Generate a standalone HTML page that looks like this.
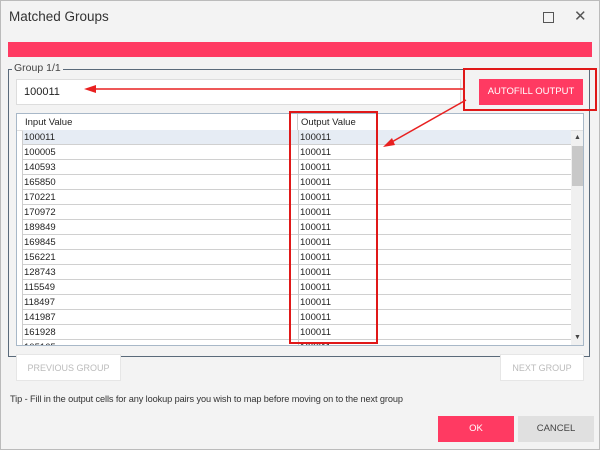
<!DOCTYPE html>
<html><head><style>
*{margin:0;padding:0;box-sizing:border-box}
body{width:600px;height:450px;background:#f3f3f3;font-family:"Liberation Sans",sans-serif;position:relative;overflow:hidden}
.a{position:absolute}
.grid{position:absolute;left:16px;top:113px;width:568px;height:233px;background:#fff;border:1px solid #a8b8c8;overflow:hidden}
.r{position:absolute;left:6px;width:548px;height:15px;border-bottom:1px solid #d0d0d0;font-size:9.5px;line-height:15px;color:#222;overflow:hidden}
.r b{font-weight:normal;position:absolute;left:1px;top:0}
.r i{font-style:normal;position:absolute;left:275px;top:0;height:15px;border-left:1px solid #ccc;padding-left:1px}
</style></head><body>
<div class="a" style="position:absolute;left:0;top:0;width:600px;height:450px;border:1px solid #bbb"></div>
<div class="a" style="left:9px;top:9px;font-size:13.5px;color:#333">Matched Groups</div>
<div class="a" style="left:543px;top:12px;width:11px;height:11px;border:1px solid #555"></div>
<div class="a" style="left:574px;top:7px;font-size:15px;color:#555">✕</div>
<div class="a" style="left:8px;top:42px;width:584px;height:15px;background:#ff3a62"></div>
<div class="a" style="left:8px;top:69px;width:582px;height:288px;border:1px solid #5a6a7a"></div>
<div class="a" style="left:12px;top:62px;background:#f3f3f3;padding:0 2px;font-size:10.5px;color:#444">Group 1/1</div>
<div class="a" style="left:16px;top:79px;width:445px;height:26px;background:#fff;border:1px solid #ddd;font-size:11px;line-height:24px;padding-left:7px;color:#222">100011</div>
<div class="a" style="left:479px;top:79px;width:104px;height:26px;background:#ff3a62;color:#fff;font-size:9.5px;text-align:center;line-height:26px">AUTOFILL OUTPUT</div>
<div class="a" style="left:463px;top:68px;width:134px;height:43px;border:2px solid #e01818"></div>
<div class="grid">
<div class="a" style="left:0;top:0;width:568px;height:17px;border-bottom:1px solid #e0e0e0"></div>
<div class="a" style="left:8px;top:3px;font-size:9.5px;color:#222">Input Value</div>
<div class="a" style="left:284px;top:3px;font-size:9.5px;color:#222">Output Value</div>
<div class="a" style="left:280px;top:0;width:1px;height:17px;background:#ccc"></div>
<div class="a" style="left:1px;top:17px;width:5px;height:216px;border-right:1px solid #ccc"></div>
<div class="r" style="top:16px;background:#e6ecf4"><b>100011</b><i>100011</i></div>
<div class="r" style="top:31px"><b>100005</b><i>100011</i></div>
<div class="r" style="top:46px"><b>140593</b><i>100011</i></div>
<div class="r" style="top:61px"><b>165850</b><i>100011</i></div>
<div class="r" style="top:76px"><b>170221</b><i>100011</i></div>
<div class="r" style="top:91px"><b>170972</b><i>100011</i></div>
<div class="r" style="top:106px"><b>189849</b><i>100011</i></div>
<div class="r" style="top:121px"><b>169845</b><i>100011</i></div>
<div class="r" style="top:136px"><b>156221</b><i>100011</i></div>
<div class="r" style="top:151px"><b>128743</b><i>100011</i></div>
<div class="r" style="top:166px"><b>115549</b><i>100011</i></div>
<div class="r" style="top:181px"><b>118497</b><i>100011</i></div>
<div class="r" style="top:196px"><b>141987</b><i>100011</i></div>
<div class="r" style="top:211px"><b>161928</b><i>100011</i></div>
<div class="r" style="top:226px"><b>105165</b><i>100011</i></div>
<div class="a" style="left:554px;top:17px;width:13px;height:216px;background:#f0f0f0"></div>
<div class="a" style="left:555px;top:32px;width:11px;height:40px;background:#c8c8c8"></div>
<div class="a" style="left:557px;top:20px;font-size:7px;color:#444">▲</div>
<div class="a" style="left:557px;top:220px;font-size:7px;color:#444">▼</div>
</div>
<div class="a" style="left:289px;top:111px;width:89px;height:233px;border:2px solid #e01818"></div>
<svg class="a" style="left:0;top:0" width="600" height="450">
<line x1="465" y1="89" x2="95" y2="89" stroke="#e82020" stroke-width="1.5"/>
<polygon points="84,89 96,85 96,93" fill="#e82020"/>
<line x1="466" y1="100" x2="390" y2="143" stroke="#e82020" stroke-width="1.5"/>
<polygon points="383,147 392,138 395,145" fill="#e82020"/>
</svg>
<div class="a" style="left:16px;top:354px;width:105px;height:27px;background:#fff;border:1px solid #e6e6e6;color:#bbb;font-size:9px;text-align:center;line-height:26px">PREVIOUS GROUP</div>
<div class="a" style="left:500px;top:354px;width:84px;height:27px;background:#fff;border:1px solid #e6e6e6;color:#bbb;font-size:9px;text-align:center;line-height:26px">NEXT GROUP</div>
<div class="a" style="left:10px;top:394px;font-size:9.2px;color:#333;letter-spacing:-0.1px">Tip - Fill in the output cells for any lookup pairs you wish to map before moving on to the next group</div>
<div class="a" style="left:438px;top:416px;width:76px;height:26px;background:#ff3a62;color:#fff;font-size:9.5px;text-align:center;line-height:26px">OK</div>
<div class="a" style="left:518px;top:416px;width:76px;height:26px;background:#e0e0e0;color:#444;font-size:9.5px;text-align:center;line-height:26px">CANCEL</div>
</body></html>
